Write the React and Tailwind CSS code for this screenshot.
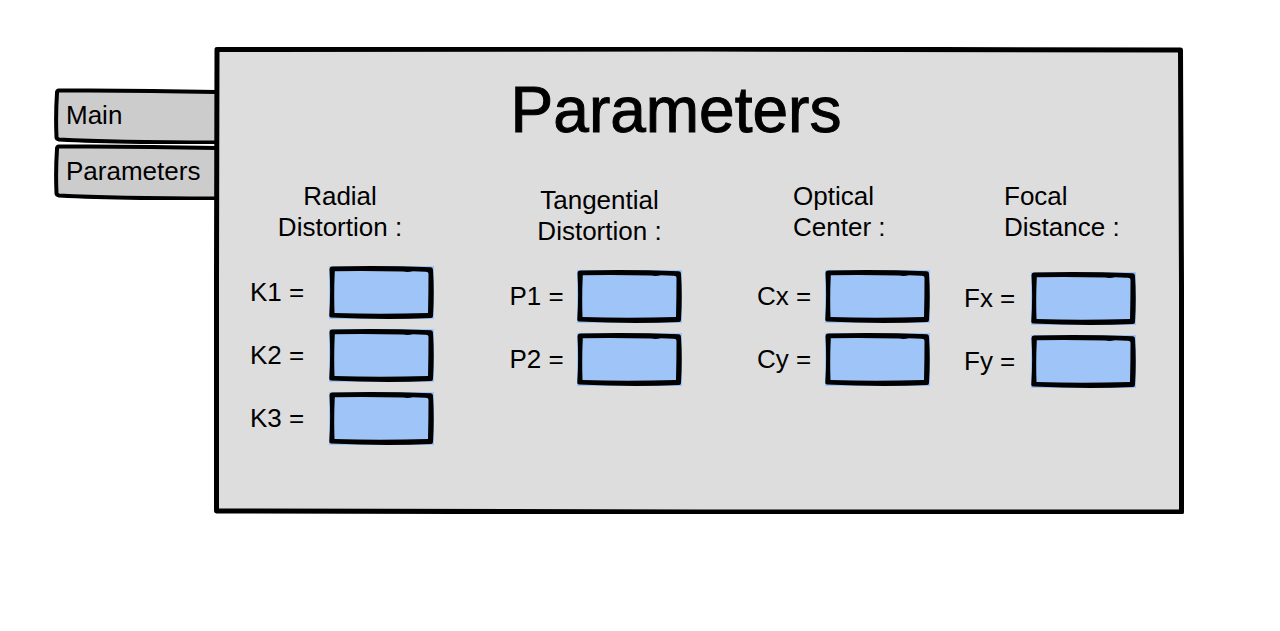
import React from "react";

function PanelOutline() {
  return (
    <svg
      aria-hidden="true"
      viewBox="0 0 970 467"
      preserveAspectRatio="none"
      className="absolute inset-0 h-full w-full"
    >
      <path
        d="M3 2.500 Q240 1.500 485 2 T966.500 3 Q967.500 120 967.500 240 T967.500 465 Q720 464.500 485 465 T2.500 464 Q2 340 2.500 230 T3 2.500 Z"
        fill="#dddddd"
        stroke="#000"
        strokeWidth="5"
        strokeLinejoin="round"
        vectorEffect="non-scaling-stroke"
      />
    </svg>
  );
}

function TabOutline() {
  return (
    <svg
      aria-hidden="true"
      viewBox="0 0 162 56"
      preserveAspectRatio="none"
      className="absolute inset-0 h-full w-full"
    >
      <path
        d="M162 4 Q80 2 5 2.500 Q3 2.500 3 5 Q1.500 27 2.500 49 Q2.500 51 5 51.500 Q60 54.500 162 54.500"
        fill="#cccccc"
        stroke="#000"
        strokeWidth="4"
        strokeLinejoin="round"
        vectorEffect="non-scaling-stroke"
      />
    </svg>
  );
}

function FieldOutline() {
  return (
    <svg
      aria-hidden="true"
      viewBox="0 0 105 53"
      preserveAspectRatio="none"
      className="absolute inset-0 h-full w-full"
    >
      <rect x="0" y="0" width="105" height="53" fill="#9fc5f8" />
      <path
        d="M0.500 3 Q0.500 0.800 3 0.600 Q50 -0.800 102 1.300 Q104 1.500 104 4 Q105.500 26 104 50 Q104 52 102 52 Q55 54 2 51.500 Q0 51.500 0.300 49 Q1.800 26 0.500 3 Z M5.800 5.200 Q4.800 26 5.500 47 Q50 48.500 99 47 Q99.500 26 99.500 8 Q99.500 5.500 96 5.800 L84 5.300 Q79 6.500 74 5.600 Q40 4.500 5.800 5.200 Z"
        fill="#000"
        fillRule="evenodd"
      />
    </svg>
  );
}

function Tab({ children }) {
  return (
    <button
      type="button"
      className="relative h-[56px] w-full cursor-pointer pb-[2px] pl-[12px] text-left"
    >
      <TabOutline />
      <span className="relative">{children}</span>
    </button>
  );
}

function Field({ name }) {
  const id = `field-${name.toLowerCase()}`;
  return (
    <div className="flex items-center justify-between">
      <label htmlFor={id}>{name} =</label>
      <div className="relative h-[53px] w-[105px]">
        <FieldOutline />
        <input
          id={id}
          type="text"
          className="relative h-full w-full bg-transparent px-3 text-[22px] outline-none"
        />
      </div>
    </div>
  );
}

function Group({ lines, fields, className, headingClass }) {
  return (
    <section className={className}>
      <h2 className={headingClass}>
        {lines[0]}
        <br />
        {lines[1]}
      </h2>
      <div className="flex flex-col gap-[10px]">
        {fields.map((name) => (
          <Field key={name} name={name} />
        ))}
      </div>
    </section>
  );
}

export default function App() {
  return (
    <div className="flex min-h-screen items-start bg-white pt-[47px] pr-[96px] pb-8 pl-[54px] font-['Liberation_Sans',Arial,sans-serif] text-[26px] leading-[31px] text-black">
      <nav className="-mr-[2px] mt-[41px] flex w-[162px] shrink-0 flex-col">
        <Tab>Main</Tab>
        <Tab>Parameters</Tab>
      </nav>
      <main className="relative flex-1">
        <PanelOutline />
        <form className="relative pt-[31px] pr-[48px] pb-[69px] pl-[36px]">
          <h1 className="mb-[39px] pr-[34px] text-center text-[64px] leading-[64px] [-webkit-text-stroke:1px_#000]">
            Parameters
          </h1>
          <div className="flex items-start justify-between">
            <Group
              lines={["Radial", "Distortion :"]}
              fields={["K1", "K2", "K3"]}
              className="w-[184px]"
              headingClass="mb-[23px] pr-1 text-center"
            />
            <Group
              lines={["Tangential", "Distortion :"]}
              fields={["P1", "P2"]}
              className="mt-1 w-[172px]"
              headingClass="mb-[23px] pl-2 text-center"
            />
            <div className="flex items-start gap-[34px]">
              <Group
                lines={["Optical", "Center :"]}
                fields={["Cx", "Cy"]}
                className="w-[173px]"
                headingClass="mb-[27px] pl-9"
              />
              <Group
                lines={["Focal", "Distance :"]}
                fields={["Fx", "Fy"]}
                className="w-[172px]"
                headingClass="mb-[29px] pl-10"
              />
            </div>
          </div>
        </form>
      </main>
    </div>
  );
}
